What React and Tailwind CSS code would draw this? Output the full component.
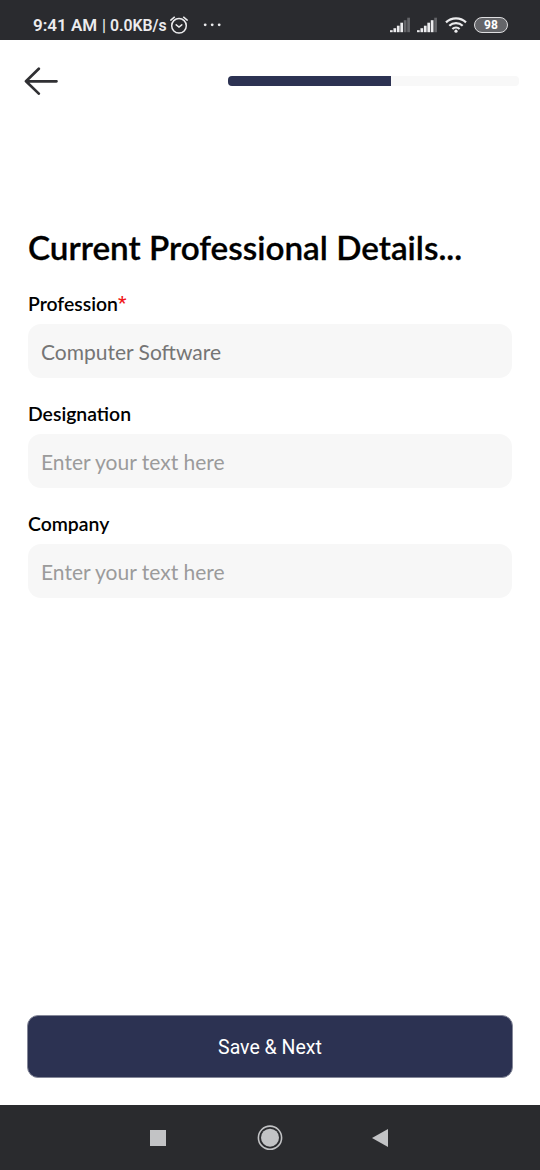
import React from "react";

function StatusBar() {
  return (
    <header className="flex h-10 shrink-0 items-center bg-[#2a2b2f] pt-[9px] text-[#ececee]">
      <span className="ml-[33px] flex w-[134px] items-baseline whitespace-nowrap pt-[2px] font-['Roboto',sans-serif] text-[16.5px] leading-5 font-semibold">
        <span className="w-[69px] text-[17px]">9:41 AM</span>
        <span className="w-2 text-[16px] font-medium">|</span>
        <span className="text-[15.8px]">0.0KB/s</span>
      </span>
      <svg className="ml-[2px] h-5 w-5" viewBox="0 0 20 20" fill="none" stroke="currentColor" strokeWidth="1.5" strokeLinecap="round">
        <circle cx="10" cy="10.8" r="7.3" />
        <path d="M1.8 5.1 5.4 2.2M18.2 5.1 14.6 2.2M7.2 9.8 10 12l2.8-2.2" />
      </svg>
      <svg className="ml-[14px] h-5 w-5" viewBox="0 0 20 20" fill="currentColor">
        <circle cx="2.2" cy="9.8" r="1.4" />
        <circle cx="9.2" cy="9.8" r="1.4" />
        <circle cx="16.2" cy="9.8" r="1.4" />
      </svg>
      <div className="mr-8 ml-auto flex items-center">
        <Signal dim={2} />
        <span className="w-[7px]" />
        <Signal dim={1} />
        <svg className="ml-2 h-4 w-[22px]" viewBox="0 0 22 16" fill="none" stroke="currentColor" strokeWidth="2.2">
          <path d="M1 5.4a14.4 14.4 0 0 1 20 0M4.3 8.8a9.6 9.6 0 0 1 13.4 0M7.4 12a5.2 5.2 0 0 1 7.2 0" />
          <circle cx="11" cy="14.2" r="1.6" fill="currentColor" stroke="none" />
        </svg>
        <span className="ml-[7px] flex h-4 w-[34px] items-center justify-center rounded-full border-[1.5px] border-[#dedee0] bg-[#646569] pt-px font-['Roboto',sans-serif] text-[12px] leading-none font-bold text-white">
          98
        </span>
      </div>
    </header>
  );
}

function Signal({ dim }) {
  const bars = [2, 4, 6.5, 9.5, 12, 14.5];
  return (
    <svg className="h-4 w-5" viewBox="0 0 20 16">
      {bars.map((h, i) => (
        <rect key={h} x={i * 3.45} y={15.2 - h} width="2.7" height={h} fill={i >= bars.length - dim ? "#646569" : "#ececee"} />
      ))}
    </svg>
  );
}

function Field({ label, required, value }) {
  return (
    <label className="mb-[25px] block">
      <span className="flex h-[31px] items-start text-[19.4px] leading-[22px] font-semibold">
        {label}
        {required && <span className="font-['Roboto',sans-serif] text-[19px] leading-[20px] font-medium text-[#f01818]">*</span>}
      </span>
      <input
        className="block h-[54px] w-full rounded-[13px] bg-[#f7f7f7] px-[13px] pt-px pb-px text-[21px] text-[#757575] outline-none placeholder:text-[#9b9b9b] placeholder:opacity-100"
        defaultValue={value}
        placeholder="Enter your text here"
      />
    </label>
  );
}

export default function App() {
  return (
    <div className="flex h-[1170px] w-[540px] flex-col overflow-hidden bg-white font-['Lato',sans-serif] text-black">
      <StatusBar />
      <nav className="flex h-[82px] shrink-0 items-center justify-between pr-[21px] pl-6">
        <button aria-label="Back">
          <svg className="h-7 w-[34px]" viewBox="0 0 34 28" fill="none" stroke="#303033" strokeWidth="2.7" strokeLinecap="round" strokeLinejoin="round">
            <path d="M32.5 14.3H2M14.8 1.8 2 14.3l12.8 12.3" />
          </svg>
        </button>
        <div className="h-[10px] w-[291px] overflow-hidden rounded-[4px] bg-[#f8f8f8]">
          <div className="h-full w-[163px] bg-[#2c3252]" />
        </div>
      </nav>
      <main className="flex grow flex-col px-7 pt-[104px]">
        <h1 className="h-[67px] text-[33.25px] leading-[42px] font-semibold whitespace-nowrap [-webkit-text-stroke:0.3px_black]">Current Professional Details...</h1>
        <Field label="Profession" required value="Computer Software" />
        <Field label="Designation" />
        <Field label="Company" />
        <button className="-mx-px mt-auto mb-[27px] h-[63px] rounded-[11px] border border-[#858899] bg-[#2c3252] pt-[2px] font-['Roboto',sans-serif] text-[19.5px] text-white">
          Save &amp; Next
        </button>
      </main>
      <footer className="flex h-[65px] shrink-0 items-center bg-[#2a2b2e] text-[#c2c3c5]">
        <svg className="ml-[150px] h-4 w-4" viewBox="0 0 16 16" fill="currentColor">
          <path d="M0 0h16v16H0z" />
        </svg>
        <svg className="ml-[91px] h-[26px] w-[26px]" viewBox="0 0 26 26">
          <circle cx="13" cy="12.7" r="11.6" fill="none" stroke="currentColor" strokeWidth="1.6" />
          <circle cx="13" cy="12.7" r="9" fill="currentColor" />
        </svg>
        <svg className="ml-[89px] h-[18px] w-4" viewBox="0 0 16 18" fill="currentColor">
          <path d="M16 0v18L0 9z" />
        </svg>
      </footer>
    </div>
  );
}
